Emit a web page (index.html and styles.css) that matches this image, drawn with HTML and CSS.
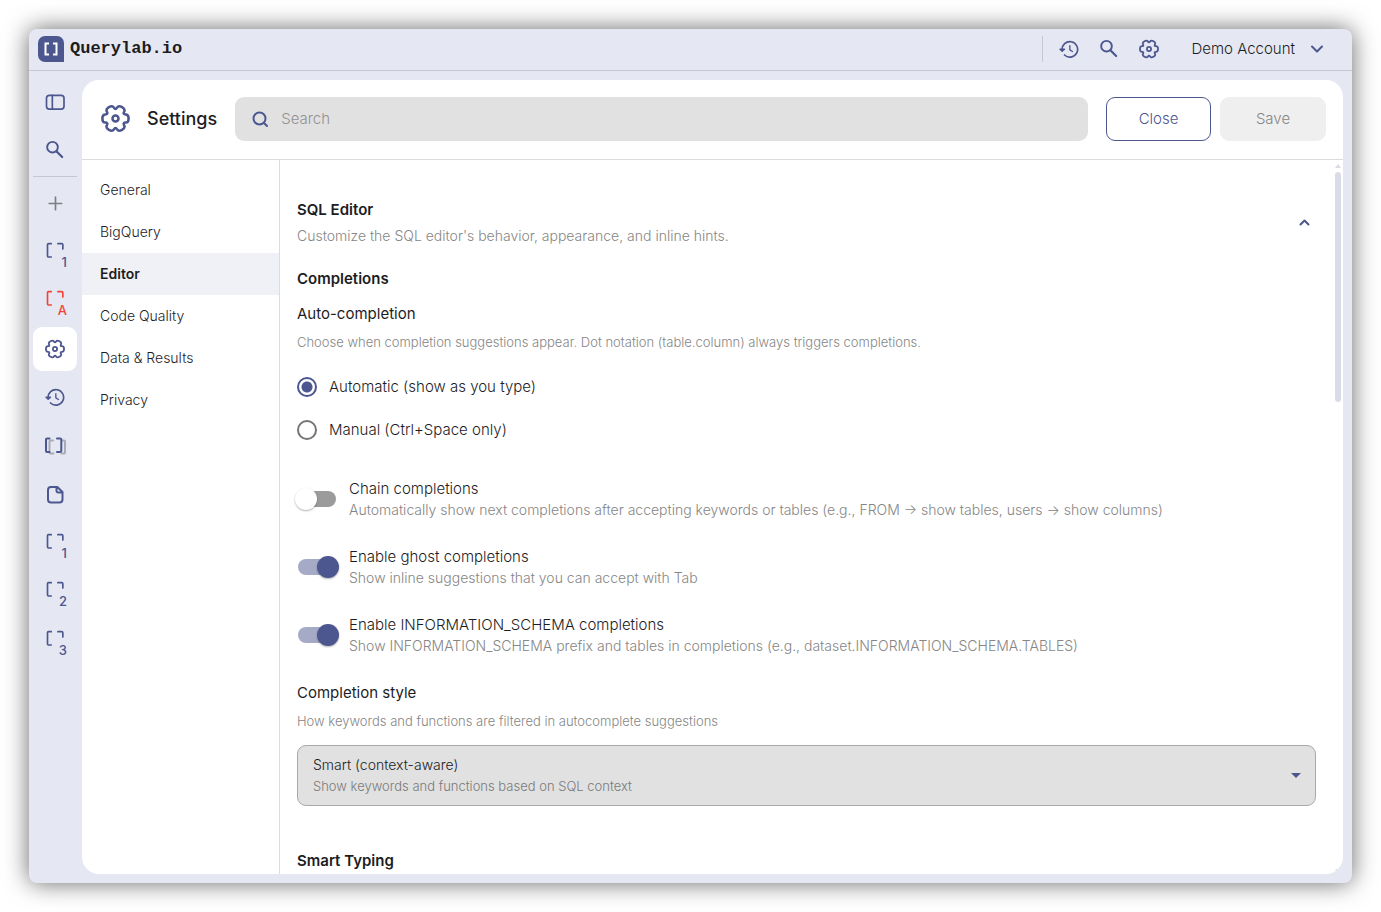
FILE: index.html
```
<!DOCTYPE html>
<html lang="en">
<head>
    <meta charset="UTF-8">
    <meta name="viewport" content="width=device-width, initial-scale=1.0">
    <title>Querylab.io - Settings</title>
    <link rel="stylesheet" href="styles.css">
</head>
<body>
    <!-- shared icons -->
    <svg class="sprite" aria-hidden="true">
        <symbol id="gear" viewBox="-11.5 -11.5 23 23">
            <path d="M10.42 0Q10.42 3.19 8.07 3.25Q5.72 3.3 6.85 5.37Q7.97 7.43 5.21 9.03Q2.45 10.62 1.23 8.61Q0 6.6 -1.23 8.61Q-2.45 10.62 -5.21 9.03Q-7.97 7.43 -6.85 5.37Q-5.72 3.3 -8.07 3.25Q-10.42 3.19 -10.42 0Q-10.42 -3.19 -8.07 -3.25Q-5.72 -3.3 -6.85 -5.37Q-7.97 -7.43 -5.21 -9.03Q-2.45 -10.62 -1.23 -8.61Q0 -6.6 1.23 -8.61Q2.45 -10.62 5.21 -9.03Q7.97 -7.43 6.85 -5.37Q5.72 -3.3 8.07 -3.25Q10.42 -3.19 10.42 0Z"/>
            <circle r="2.4"/>
        </symbol>
        <symbol id="search" viewBox="0 0 24 24">
            <circle cx="9" cy="8.6" r="6.4" stroke-width="2.3"/>
            <path d="M14 13.8l6.6 6.6" stroke-width="2.6"/>
        </symbol>
        <symbol id="history" viewBox="0 0 24 24">
            <path d="M3.8 13.5A9.3 9.3 0 1 1 6.6 19.2"/>
            <path d="M1.2 12.2l2.6 2.6 2.8-2.6z" fill="currentColor" stroke-width="1.6"/>
            <path d="M13 8v5l3.2 2" stroke-width="1.6"/>
        </symbol>
        <symbol id="tab" viewBox="0 0 24 24">
            <path d="M7.5 2H4.2Q3 2 3 3.2V16.8Q3 18 4.2 18H7.5M15.5 2H20Q21.4 2 21.4 3.4V8.5"/>
        </symbol>
    </svg>

    <div class="app">
        <header class="topbar">
            <a class="brand" href="#">
                <svg class="logo" viewBox="0 0 26 26" aria-hidden="true">
                    <path d="M7 0H19A7 7 0 0 1 26 7V26H7A7 7 0 0 1 0 19V7A7 7 0 0 1 7 0Z" fill="#4c568f"/>
                    <path d="M11 7.5H7.5V18.5H11M15 7.5H18.5V18.5H15" fill="none" stroke="#fff" stroke-width="2"/>
                </svg>
                <span>Querylab.io</span>
            </a>
            <div class="tools">
                <button class="tool" aria-label="History"><svg class="icon"><use href="#history"/></svg></button>
                <button class="tool" aria-label="Search"><svg class="icon"><use href="#search"/></svg></button>
                <button class="tool" aria-label="Settings"><svg class="icon"><use href="#gear"/></svg></button>
            </div>
            <button class="account">
                <span>Demo Account</span>
                <svg class="icon" viewBox="0 0 20 20"><path d="M5 7.5l5 5 5-5"/></svg>
            </button>
        </header>

        <div class="main">
            <nav class="rail" aria-label="Tabs">
                <div class="rail-top">
                    <button class="rail-btn" aria-label="Toggle panel">
                        <svg class="icon" viewBox="0 0 24 24"><rect x="1.8" y="4" width="21" height="16.5" rx="3.5"/><path d="M8.8 4v16.5"/></svg>
                    </button>
                    <button class="rail-btn" aria-label="Search"><svg class="icon"><use href="#search"/></svg></button>
                </div>
                <div class="rail-tabs">
                    <button class="rail-btn add" aria-label="New tab">
                        <svg class="icon" viewBox="0 0 24 24"><path d="M12.6 5v15M5 12.6h15"/></svg>
                    </button>
                    <button class="rail-btn"><svg class="icon"><use href="#tab"/></svg><span class="num">1</span></button>
                    <button class="rail-btn error"><svg class="icon"><use href="#tab"/></svg><span class="num">A</span></button>
                    <button class="rail-btn active" aria-label="Settings"><svg class="icon"><use href="#gear"/></svg></button>
                    <button class="rail-btn" aria-label="History"><svg class="icon"><use href="#history"/></svg></button>
                    <button class="rail-btn" aria-label="Queries">
                        <svg class="icon wide" viewBox="0 0 22 20">
                            <path d="M9 4.500H6.500Q5.500 4.500 5.500 5.500V16.500Q5.500 17.500 6.500 17.500H9.500M18 4.500H20Q21 4.500 21 5.500V16.500Q21 17.500 20 17.500H17.500" stroke="#a9abb5"/>
                            <path d="M5.500 2.500H3Q2 2.500 2 3.500V15Q2 16 3 16H5.500M13 2.500H16Q17.300 2.500 17.300 3.500V15Q17.300 16 16 16H13"/>
                        </svg>
                    </button>
                    <button class="rail-btn" aria-label="File">
                        <svg class="icon" viewBox="0 0 20 20"><path d="M6 3H12.300L17.500 8V15.500Q17.500 18.500 14.500 18.500H6Q3 18.500 3 15.500V6Q3 3 6 3ZM11.500 3V6.500Q11.500 8.500 13.500 8.500H17.500"/></svg>
                    </button>
                    <button class="rail-btn"><svg class="icon"><use href="#tab"/></svg><span class="num">1</span></button>
                    <button class="rail-btn"><svg class="icon"><use href="#tab"/></svg><span class="num">2</span></button>
                    <button class="rail-btn"><svg class="icon"><use href="#tab"/></svg><span class="num">3</span></button>
                </div>
            </nav>

            <section class="panel">
                <div class="panel-head">
                    <svg class="icon big"><use href="#gear"/></svg>
                    <h1>Settings</h1>
                    <label class="search">
                        <svg class="icon" viewBox="0 0 20 20"><circle cx="9.5" cy="9.5" r="6"/><path d="M14 14l3 3"/></svg>
                        <input type="search" placeholder="Search" aria-label="Search settings">
                    </label>
                    <button class="btn">Close</button>
                    <button class="btn save" disabled>Save</button>
                </div>

                <div class="panel-body">
                    <nav class="menu" aria-label="Settings sections">
                        <a href="#">General</a>
                        <a href="#">BigQuery</a>
                        <a href="#" class="current">Editor</a>
                        <a href="#">Code Quality</a>
                        <a href="#">Data &amp; Results</a>
                        <a href="#">Privacy</a>
                    </nav>

                    <div class="content">
                        <div class="section-head">
                            <div>
                                <h2>SQL Editor</h2>
                                <p class="lead">Customize the SQL editor's behavior, appearance, and inline hints.</p>
                            </div>
                            <button class="collapse" aria-label="Collapse">
                                <svg class="icon" viewBox="0 0 20 20"><path d="M6.500 11.500l4-4 4 4"/></svg>
                            </button>
                        </div>

                        <h2 class="group">Completions</h2>
                        <h3>Auto-completion</h3>
                        <p class="hint">Choose when completion suggestions appear. Dot notation (table.column) always triggers completions.</p>
                        <div class="radios">
                            <label><input type="radio" name="auto" checked>Automatic (show as you type)</label>
                            <label><input type="radio" name="auto">Manual (Ctrl+Space only)</label>
                        </div>

                        <div class="switches">
                            <label class="switch-row">
                                <input type="checkbox" role="switch">
                                <span>Chain completions<small>Automatically show next completions after accepting keywords or tables (e.g., FROM → show tables, users → show columns)</small></span>
                            </label>
                            <label class="switch-row">
                                <input type="checkbox" role="switch" checked>
                                <span>Enable ghost completions<small>Show inline suggestions that you can accept with Tab</small></span>
                            </label>
                            <label class="switch-row">
                                <input type="checkbox" role="switch" checked>
                                <span>Enable INFORMATION_SCHEMA completions<small>Show INFORMATION_SCHEMA prefix and tables in completions (e.g., dataset.INFORMATION_SCHEMA.TABLES)</small></span>
                            </label>
                        </div>

                        <h3><label for="style">Completion style</label></h3>
                        <p class="hint">How keywords and functions are filtered in autocomplete suggestions</p>
                        <div class="select">
                            <select id="style">
                                <option>Smart (context-aware)</option>
                            </select>
                            <span class="select-note">Show keywords and functions based on SQL context</span>
                        </div>

                        <h2 class="next">Smart Typing</h2>
                    </div>

                    <div class="scrollbar" aria-hidden="true">
                        <span class="arrow-up"></span>
                        <span class="thumb"></span>
                        <span class="arrow-down"></span>
                    </div>
                </div>
            </section>
        </div>
    </div>
</body>
</html>
```
FILE: styles.css
```
:root {
    --primary: #4c568f;
    --bg: #e5e8f2;
    --text: #1d1d1f;
    --muted: #868686;
    --line: #dcdcdf;
    --field: #e1e1e1;
}
* {
    box-sizing: border-box;
}
body {
    margin: 0;
    padding: 29px;
    height: 100vh;
    overflow: hidden;
    background: #fff;
    color: var(--text);
    font-family: Inter, "Liberation Sans", sans-serif;
    font-size: 15px;
    font-weight: 300;
    line-height: 20px;
}
button, input, select {
    font: inherit;
    color: inherit;
}
button {
    border: 0;
    padding: 0;
    background: none;
    cursor: pointer;
}
a {
    color: inherit;
    text-decoration: none;
}
h1, h2, h3, p {
    margin: 0;
}
h2 {
    font-size: 15px;
    font-weight: 600;
}
h3 {
    font-size: 15px;
    font-weight: 400;
}
.sprite {
    position: absolute;
    width: 0;
    height: 0;
}
.icon {
    display: block;
    flex: none;
    width: 20px;
    height: 20px;
    fill: none;
    stroke: currentColor;
    stroke-width: 2;
    stroke-linecap: round;
    stroke-linejoin: round;
    color: var(--primary);
}
.icon.big {
    width: 29px;
    height: 29px;
}
.icon.wide {
    width: 22px;
}

/* window */
.app {
    display: flex;
    flex-direction: column;
    height: 100%;
    border-radius: 8px;
    background: var(--bg);
    box-shadow: 0 0 25px rgba(0, 0, 0, 0.6);
}
.topbar {
    display: flex;
    align-items: center;
    flex: none;
    height: 42px;
    padding: 0 25px 1px 9px;
    border-bottom: 1px solid #c5c8d3;
}
.brand {
    display: flex;
    align-items: center;
    gap: 6px;
    margin-right: auto;
    font-family: "Liberation Mono", monospace;
    font-size: 17px;
    font-weight: 700;
}
.logo {
    width: 26px;
    height: 26px;
}
.tools {
    display: flex;
    padding-left: 6px;
    border-left: 1px solid #c5c8d3;
}
.tool {
    display: grid;
    place-items: center;
    width: 40px;
    height: 26px;
}
.account {
    display: flex;
    align-items: center;
    gap: 12px;
    margin-left: 22px;
}
.main {
    display: flex;
    flex: 1;
    min-height: 0;
    padding: 9px 9px 9px 0;
}

/* left rail */
.rail {
    flex: none;
    width: 53px;
    padding: 0 5px 0 4px;
}
.rail-top {
    display: grid;
    gap: 4px;
    padding-bottom: 4px;
    border-bottom: 1px solid #c5c8d3;
}
.rail-tabs {
    display: flex;
    flex-direction: column;
    justify-content: space-between;
    height: 481px;
    margin-top: 4px;
}
.rail-btn {
    position: relative;
    display: grid;
    place-items: center;
    width: 44px;
    height: 44px;
    border-radius: 9px;
}
.rail-btn.active {
    background: #fff;
}
.rail-btn.add .icon {
    color: #7d7e84;
}
.num {
    position: absolute;
    right: 10px;
    bottom: 2px;
    color: var(--primary);
    font-size: 13px;
    font-weight: 500;
    line-height: 20px;
}
.rail-btn.error .icon, .rail-btn.error .num {
    color: #f44336;
}

/* settings panel */
.panel {
    display: flex;
    flex-direction: column;
    flex: 1;
    min-width: 0;
    border-radius: 17px;
    background: #fff;
    overflow: hidden;
}
.panel-head {
    display: flex;
    align-items: center;
    flex: none;
    height: 80px;
    padding: 0 17px 2px 19px;
    border-bottom: 1px solid var(--line);
}
h1 {
    margin: 0 18px 0 17px;
    font-size: 18px;
    font-weight: 500;
}
.search {
    display: flex;
    align-items: center;
    flex: 1;
    gap: 11px;
    height: 44px;
    margin-right: 18px;
    padding: 0 15px;
    border-radius: 9px;
    background: var(--field);
}
.search input {
    flex: 1;
    min-width: 0;
    padding: 0;
    border: 0;
    outline: 0;
    background: none;
}
.search input::placeholder {
    color: #929292;
}
.btn {
    width: 105px;
    height: 44px;
    border: 1px solid var(--primary);
    border-radius: 9px;
    color: var(--primary);
}
.btn.save {
    width: 106px;
    margin-left: 9px;
    border-color: #efefef;
    background: #efefef;
    color: #858585;
}
.panel-body {
    display: flex;
    flex: 1;
    min-height: 0;
}
.menu {
    display: flex;
    flex-direction: column;
    flex: none;
    width: 198px;
    padding-top: 9px;
    border-right: 1px solid var(--line);
    font-size: 14px;
}
.menu a {
    padding: 11px 18px;
}
.menu .current {
    background: #f0f1f6;
    font-weight: 600;
}

/* content */
.content {
    flex: 1;
    min-width: 0;
    padding: 40px 18px 0 17px;
    overflow: hidden;
}
.section-head {
    display: flex;
    align-items: center;
    justify-content: space-between;
}
.lead {
    margin-top: 6px;
    color: var(--muted);
    font-size: 14px;
}
.collapse {
    padding: 0 2px;
}
.group {
    margin: 23px 0 15px;
}
.hint {
    margin-top: 8px;
    color: var(--muted);
    font-size: 13px;
}
.radios {
    display: grid;
    gap: 23px;
    margin: 25px 0 38px;
}
.radios label {
    display: flex;
    align-items: center;
    gap: 12px;
}
.radios input {
    appearance: none;
    width: 20px;
    height: 20px;
    margin: 0;
    border: 2px solid #757575;
    border-radius: 50%;
}
.radios input:checked {
    border-color: var(--primary);
    background: radial-gradient(circle, var(--primary) 5px, transparent 6px);
}
.switches {
    display: grid;
    gap: 26px;
    margin-bottom: 27px;
}
.switch-row {
    display: flex;
    align-items: center;
    gap: 10px;
    margin-left: -2px;
    line-height: 21px;
}
.switch-row input {
    appearance: none;
    position: relative;
    display: flex;
    align-items: center;
    flex: none;
    width: 44px;
    height: 22px;
    margin: 0;
    padding: 0 3px;
}
.switch-row input::before {
    content: "";
    width: 100%;
    height: 16px;
    border-radius: 8px;
    background: #9b9b9b;
}
.switch-row input::after {
    content: "";
    position: absolute;
    left: 0;
    top: 0;
    width: 22px;
    height: 22px;
    border-radius: 50%;
    background: #fff;
    box-shadow: 0 1px 2px rgba(0, 0, 0, 0.3);
}
.switch-row input:checked::before {
    background: #a5aac7;
}
.switch-row input:checked::after {
    left: auto;
    right: 0;
    background: var(--primary);
}
.switch-row small {
    display: block;
    color: var(--muted);
    font-size: 14px;
}
.select {
    position: relative;
    margin-top: 14px;
}
.select select {
    appearance: none;
    display: block;
    width: 100%;
    height: 61px;
    padding: 0 15px 22px;
    border: 1px solid #a9a9a9;
    border-radius: 9px;
    background: var(--field);
    font-size: 14px;
}
.select::after {
    content: "";
    position: absolute;
    right: 15px;
    top: 28px;
    border: 5px solid transparent;
    border-top-color: var(--primary);
    border-bottom: 0;
}
.select-note {
    position: absolute;
    left: 16px;
    bottom: 10px;
    color: #7a7a7a;
    font-size: 13px;
    pointer-events: none;
}
.next {
    margin-top: 45px;
}

.scrollbar {
    display: flex;
    flex-direction: column;
    align-items: center;
    flex: none;
    width: 9px;
    padding: 4px 2px 1px 0;
}
.arrow-up, .arrow-down {
    border: 3px solid transparent;
}
.arrow-up {
    border-top: 0;
    border-bottom: 4px solid #d9dce8;
}
.arrow-down {
    margin-top: auto;
    border-bottom: 0;
    border-top: 4px solid #d9dce8;
}
.thumb {
    width: 6px;
    height: 230px;
    margin-top: 4px;
    border-radius: 3px;
    background: #d9dce8;
}
```
